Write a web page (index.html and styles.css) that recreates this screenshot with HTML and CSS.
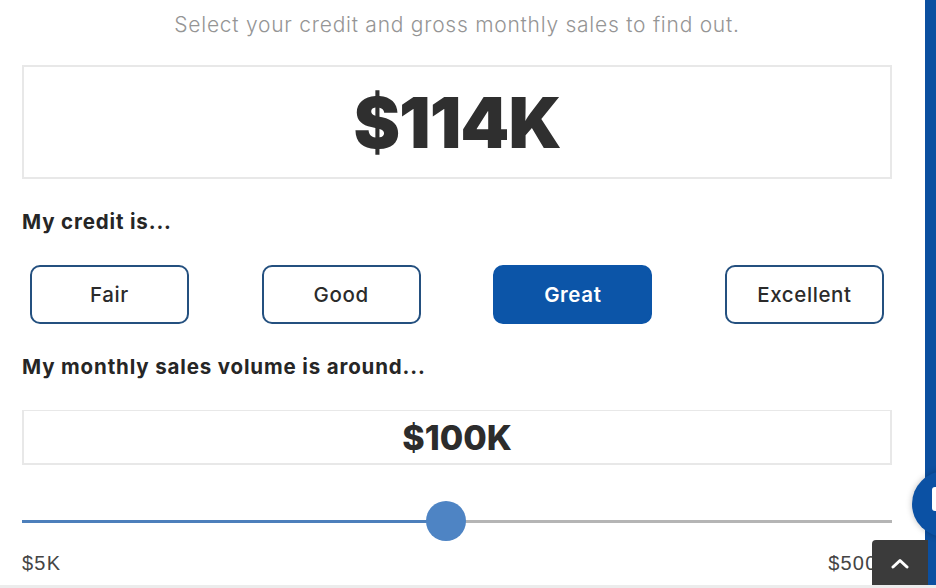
FILE: index.html
```html
<!DOCTYPE html>
<html lang="en">
<head>
<meta charset="utf-8">
<title>Funding calculator</title>
<link rel="stylesheet" href="styles.css">
</head>
<body>
<main class="calc">
  <p class="subtitle">Select your credit and gross monthly sales to find out.</p>
  <div class="result">$114K</div>
  <h3 class="label">My credit is...</h3>
  <div class="credit-row">
    <button class="credit">Fair</button>
    <button class="credit">Good</button>
    <button class="credit active">Great</button>
    <button class="credit">Excellent</button>
  </div>
  <h3 class="label label-sales">My monthly sales volume is around...</h3>
  <div class="sales">$100K</div>
  <div class="slider">
    <div class="track">
      <div class="fill" style="width:48.7%"></div>
      <div class="thumb" style="left:48.7%"></div>
    </div>
  </div>
  <div class="range-labels">
    <span>$5K</span>
    <span>$500K</span>
  </div>
</main>
<div class="sidebar"></div>
<div class="chat"><span class="chat-icon"></span></div>
<button class="to-top" aria-label="Back to top">
  <svg width="20" height="12" viewBox="0 0 20 12"><path d="M3 10 L10 3.5 L17 10" fill="none" stroke="#fff" stroke-width="3" stroke-linecap="round" stroke-linejoin="round"/></svg>
</button>
<div class="bottom-strip"></div>
</body>
</html>
```
FILE: styles.css
```css
html, body {
  margin: 0;
  padding: 0;
  background: #ffffff;
  width: 936px;
  height: 588px;
  overflow: hidden;
}
body {
  font-family: Inter, "Noto Sans", sans-serif;
  color: #2e2e2e;
  position: relative;
}
.calc {
  width: 870px;
  padding-left: 22px;
  display: flex;
  flex-direction: column;
}
.subtitle {
  margin: 0;
  height: 49px;
  line-height: 49px;
  text-align: center;
  font-weight: 300;
  font-size: 21px;
  color: #959595;
  letter-spacing: 0.75px;
}
.result {
  margin-top: 16px;
  height: 110px;
  border: 2px solid #e8e8e8;
  display: flex;
  align-items: center;
  justify-content: center;
  font-weight: 900;
  font-size: 70px;
  color: #2f2f2f;
  letter-spacing: -1px;
}
.label {
  margin: 0;
  margin-top: 28px;
  font-size: 20.5px;
  font-weight: 700;
  color: #262626;
  line-height: 30px;
  letter-spacing: 0.85px;
}
.credit-row {
  margin-top: 28px;
  padding: 0 8px;
  display: flex;
  justify-content: space-between;
}
.credit {
  width: 159px;
  height: 59px;
  border: 2px solid #24507f;
  border-radius: 10px;
  background: #fff;
  font-family: Inter, "Noto Sans", sans-serif;
  font-size: 20.5px;
  letter-spacing: 0.6px;
  font-weight: 500;
  color: #2b2b2b;
  padding: 0;
}
.credit.active {
  background: #0c55a8;
  border-color: #0c55a8;
  color: #ffffff;
  font-weight: 600;
}
.label-sales {
  margin-top: 28px;
}
.sales {
  margin-top: 28px;
  height: 52px;
  border: 2px solid #e8e8e8;
  border-width: 1.5px 2px 2px 2px;
  display: flex;
  align-items: center;
  justify-content: center;
  font-weight: 800;
  font-size: 34px;
  color: #2c2c2c;
}
.slider {
  margin-top: 36px;
  height: 40px;
  display: flex;
  align-items: center;
}
.track {
  position: relative;
  width: 100%;
  height: 3px;
  background: #b5b5b5;
}
.fill {
  height: 100%;
  background: #4d7fbb;
}
.thumb {
  position: absolute;
  top: 50%;
  width: 40px;
  height: 40px;
  margin-left: -20px;
  margin-top: -20px;
  border-radius: 50%;
  background: #4e84c4;
}
.range-labels {
  margin-top: 10px;
  display: flex;
  justify-content: space-between;
  font-family: "Liberation Sans", Arial, sans-serif;
  font-size: 20px;
  letter-spacing: 1.2px;
  color: #444;
  line-height: 24px;
}
.sidebar {
  position: absolute;
  top: 0;
  right: 0;
  width: 11px;
  height: 588px;
  background: #0b4fa0;
}
.chat {
  position: absolute;
  left: 912px;
  top: 471px;
  width: 66px;
  height: 66px;
  border-radius: 50%;
  background: #0b51a4;
  box-shadow: 0 0 6px rgba(0,0,0,0.25);
}
.chat-icon {
  position: absolute;
  left: 20px;
  top: 16px;
  width: 30px;
  height: 24px;
  background: #fff;
  border-radius: 3px;
}
.to-top {
  position: absolute;
  left: 872px;
  top: 540px;
  width: 56px;
  height: 46px;
  border: 0;
  border-radius: 4px 0 0 0;
  background: #3b3b3b;
  display: flex;
  align-items: center;
  justify-content: center;
  padding: 0;
}
.bottom-strip {
  position: absolute;
  left: 0;
  bottom: 0;
  width: 100%;
  height: 3px;
  background: #ececec;
}
```
